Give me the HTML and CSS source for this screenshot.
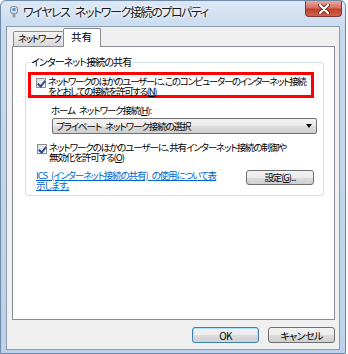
FILE: index.html
```html
<!DOCTYPE html>
<html lang="ja">
<head>
  <meta charset="UTF-8">
  <title>ワイヤレス ネットワーク接続のプロパティ</title>
  <link rel="stylesheet" href="styles.css">
</head>
<body>
  <div class="window">
    <div class="titlebar">
      <svg class="title-icon" width="8" height="12" viewBox="0 0 8 12">
        <rect x="0.5" y="0.5" width="7" height="7" rx="2" fill="#d8dde3" stroke="#7d8792"/>
        <rect x="2.5" y="2" width="3" height="3" fill="#5a8fd0"/>
        <rect x="2.5" y="7.5" width="3" height="4" fill="#9aa3ad"/>
      </svg>
      <div class="title">ワイヤレス ネットワーク接続のプロパティ</div>
      <div class="close-btn">
        <svg width="12" height="10" viewBox="0 0 12 10">
          <path d="M2 1 L10 9 M10 1 L2 9" stroke="#6a2b26" stroke-width="4" stroke-linecap="round"/>
          <path d="M2 1 L10 9 M10 1 L2 9" stroke="#fff" stroke-width="2.2" stroke-linecap="round"/>
        </svg>
      </div>
    </div>

    <div class="client">
      <div class="tabs">
        <div class="tab">ネットワーク</div>
        <div class="tab active">共有</div>
      </div>

      <div class="panel">
        <fieldset class="group">
          <legend>インターネット接続の共有</legend>

          <div class="highlight">
            <span class="checkbox"></span>
            <span class="check-label">ネットワークのほかのユーザーに、このコンピューターのインターネット接続<br>をとおしての接続を許可する(<u>N</u>)</span>
          </div>

          <div class="field-label">ホーム ネットワーク接続(<u>H</u>):</div>
          <div class="combo">
            <span>プライベート ネットワーク接続の選択</span>
            <span class="combo-arrow"></span>
          </div>

          <div class="check-row">
            <span class="checkbox"></span>
            <span class="check-label">ネットワークのほかのユーザーに、共有インターネット接続の制御や<br>無効化を許可する(<u>O</u>)</span>
          </div>

          <div class="link-row">
            <a class="help-link" href="#">ICS (インターネット接続の共有) の使用について表<br>示します。</a>
            <button class="btn settings-btn">設定(<u>G</u>)...</button>
          </div>
        </fieldset>
      </div>

      <div class="dialog-buttons">
        <button class="btn default">OK</button>
        <button class="btn">キャンセル</button>
      </div>
    </div>
  </div>
</body>
</html>
```

FILE: styles.css
```css
* {
  box-sizing: border-box;
}

body {
  margin: 0;
  background: #fff;
  font-family: "Noto Sans CJK JP", "Noto Sans", sans-serif;
  font-size: 9.5px;
  color: #000;
  font-feature-settings: "palt";
  letter-spacing: -1.1px;
  word-spacing: 3px;
}

u {
  text-decoration: underline;
}

/* window frame */
.window {
  width: 346px;
  height: 354px;
  border: 1px solid #6f89a8;
  border-radius: 6px 6px 0 0;
  background: linear-gradient(#dce8f6, #c6d9ef 30px, #bdd2ea);
  padding: 0 5px 3px;
  display: flex;
  flex-direction: column;
}

.titlebar {
  height: 25px;
  display: flex;
  align-items: flex-start;
}

.title-icon {
  margin: 5px 0 0 4px;
}

.title {
  margin: 4px 0 0 5px;
  font-size: 12px;
  line-height: 14px;
  letter-spacing: -1.4px;
  word-spacing: 4px;
  color: #1a1a1a;
  text-shadow: 0 0 5px #fff, 0 0 3px #fff;
  flex: 1;
}

.close-btn {
  width: 37px;
  height: 16px;
  margin-right: -2px;
  border: 1px solid #7a3b36;
  border-top: none;
  border-radius: 0 0 4px 4px;
  background: linear-gradient(#e9a99c, #d7705f 45%, #c0402c 55%, #d4624a);
  display: flex;
  justify-content: center;
  align-items: center;
}

.client {
  flex: 1;
  border: 1px solid #8d9db0;
  background: #f0f0f0;
  padding: 1px 4px 0 5px;
  display: flex;
  flex-direction: column;
}

/* tabs */
.tabs {
  display: flex;
  align-items: flex-end;
  padding-left: 1px;
  height: 18px;
}

.tab {
  height: 15px;
  width: 51px;
  border: 1px solid #898c95;
  border-bottom: none;
  background: linear-gradient(#f3f3f3, #e6e6e6 50%, #d9d9d9);
  line-height: 13px;
  padding-left: 4px;
  border-radius: 2px 2px 0 0;
  font-size: 9.5px;
  letter-spacing: -1.3px;
  white-space: nowrap;
  overflow: hidden;
}

.tab.active {
  position: relative;
  z-index: 1;
  height: 19px;
  width: 38px;
  margin-left: -1px;
  margin-bottom: -1px;
  background: #fff;
  padding-left: 7px;
  line-height: 15px;
  font-size: 10.5px;
  letter-spacing: 0;
}

.panel {
  height: 274px;
  background: #fff;
  border: 1px solid #898c95;
}

/* group box */
.group {
  margin: 9px 10px 0 12px;
  padding: 0 0 5px;
  border: 1px solid #d5dfe5;
  border-radius: 3px;
  min-width: 0;
}

.group legend {
  margin-left: 4px;
  padding: 0 1px;
  line-height: 12px;
  font-size: 10px;
  letter-spacing: -0.9px;
}

.highlight {
  margin: 4px 9px 0 2px;
  height: 26px;
  border: 3px solid #f00;
  display: flex;
  align-items: flex-start;
  padding-top: 1px;
}

.highlight .check-label {
  letter-spacing: -1.3px;
}

.checkbox {
  flex: none;
  width: 10px;
  height: 10px;
  margin: 2px 2px 0 5px;
  border: 1px solid #8e8f8f;
  background: linear-gradient(135deg, #dcdcdc, #fbfbfb);
  position: relative;
}

.checkbox::after {
  content: "";
  position: absolute;
  left: 2px;
  top: 0;
  width: 3px;
  height: 6px;
  border: solid #2a4c92;
  border-width: 0 2px 2px 0;
  transform: rotate(40deg);
}

.check-label {
  line-height: 10px;
  white-space: nowrap;
}

.field-label {
  margin: 6px 0 0 25px;
  line-height: 12px;
}

.combo {
  margin: 2px 0 0 26px;
  width: 265px;
  height: 16px;
  border: 1px solid #707070;
  border-radius: 2px;
  background: linear-gradient(#f2f2f2, #ebebeb 50%, #dddddd 50%, #cfcfcf);
  display: flex;
  justify-content: space-between;
  align-items: center;
  padding: 0 4px 0 3px;
}

.combo-arrow {
  width: 0;
  height: 0;
  border: 3px solid transparent;
  border-top: 4px solid #000;
  border-bottom: none;
}

.check-row {
  display: flex;
  align-items: flex-start;
  margin: 8px 0 0 6px;
}

.link-row {
  display: flex;
  justify-content: space-between;
  align-items: flex-start;
  margin: 8px 9px 0 10px;
}

.help-link {
  color: #0066cc;
  line-height: 10px;
  white-space: nowrap;
}

/* push buttons */
.btn {
  font: inherit;
  letter-spacing: inherit;
  word-spacing: inherit;
  font-feature-settings: inherit;
  color: #000;
  height: 15px;
  padding: 0;
  border: 1px solid #707070;
  border-radius: 3px;
  background: linear-gradient(#f2f2f2, #ebebeb 50%, #dddddd 50%, #cfcfcf);
  line-height: 13px;
}

.settings-btn {
  width: 68px;
}

.dialog-buttons {
  display: flex;
  justify-content: flex-end;
  gap: 9px;
  margin-top: 7px;
}

.dialog-buttons .btn {
  width: 67px;
  height: 16px;
  font-size: 10px;
  letter-spacing: -0.6px;
}

.btn.default {
  border-color: #3c7fb1;
  box-shadow: inset 0 0 0 1px #aee0f8;
}
```
